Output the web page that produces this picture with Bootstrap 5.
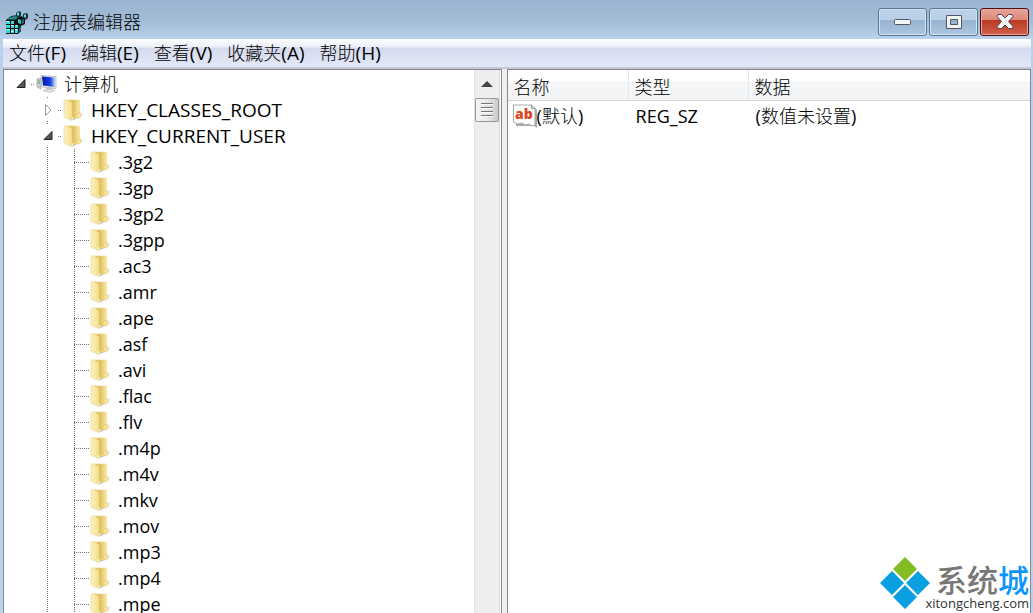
<!DOCTYPE html>
<html lang="zh-CN">
<head>
<meta charset="utf-8">
<meta name="viewport" content="width=device-width, initial-scale=1">
<title>注册表编辑器</title>
<link href="https://cdn.jsdelivr.net/npm/bootstrap@5.3.0/dist/css/bootstrap.min.css" rel="stylesheet">
<style>
body{font-family:"Open Sans","Noto Sans CJK SC",sans-serif;font-size:18px;line-height:26px;color:#000;background:#b9d1ea}
button{font:inherit}
.defs{position:absolute;width:0;height:0}
.titlebar{height:39px;background:linear-gradient(#9ab4d1,#a3bdd8 55%,#b9d1ea);padding-left:5px}
.app-icon{margin-top:10px}
.title-text{font-size:18px;font-weight:300;line-height:36px;padding-top:4px;padding-left:4px}
.cap{width:49px;height:28px;border:1px solid #5c7591;border-radius:3px;box-shadow:inset 0 0 0 1px #d3e2f1;background:linear-gradient(#bcd2e8,#b9cfe5 42%,#98b3cf 43%,#abc6e1);padding:0}
.cap-close{border-color:#4d1017;box-shadow:inset 0 0 0 1px #e9a79e;background:linear-gradient(#e6a497,#dc8878 42%,#b93a22 43%,#d0604c)}
.caps{gap:2px}
.client{margin:0 2px 0 3px;background:#f0f0f0;min-height:0}
.menubar{height:30px;background:linear-gradient(#fff,#e9edf7 30%,#d4daec 31%,#e1e7f7 26px,#e1e7f7);border-bottom:2px solid #c4c8d2;padding-left:6px;gap:15px}
.menubar button{font-size:19px;line-height:28px}
.menubar .zh{font-size:18px}
.split{gap:5px;min-height:0}
.pane{border:1px solid #828790;border-bottom:0;background:#fff}
.tree-pane{flex:0 0 48.5%}
.tree{padding-top:1px}
.tree ul{margin:0;padding:0;list-style:none}
.tree li ul{position:relative;padding-left:27px}
.tree li ul::before{content:"";position:absolute;left:43px;top:0;bottom:0;width:1px;background:repeating-linear-gradient(#777 0 1px,#fff 1px 2px)}
.node{height:26px;padding-left:11px;position:relative}
.toggle{width:12px;height:22px;border:0;background:#fff;padding:0;display:flex;align-items:center;flex:none}
.stub{width:4px;height:1px;margin:0 1px 0 4px;flex:none;background:repeating-linear-gradient(90deg,#777 0 1px,#fff 1px 2px)}
.leaf .stub{width:15px;margin:0 1px 0 5px}
.node svg.ico{width:22px;height:24px;flex:none}
.label{padding-left:6px;white-space:nowrap}
.hive{font-size:19px}
.scroll{width:26px;background:#eee;border-left:1px solid #e3e3e3;border-right:1px solid #dedede;margin-right:1px}
.scroll-up{height:28px;border:0;padding:0;background:transparent}
.thumb{height:24px;border:1px solid #979797;border-radius:2px;background:linear-gradient(90deg,#f5f5f5,#e9e9ea 50%,#c9cbce);padding:0}
.values{table-layout:fixed;width:100%;border-collapse:separate;border-spacing:0}
.values th{height:30px;padding:4px 0 0 6px;font-weight:300;background:linear-gradient(#fff 35%,#f6f7f9 36%,#f2f3f5);border-bottom:1px solid #d5d5d5;border-right:1px solid #e3e8ee}
.values th:last-child{border-right:0}
.values td{height:29px;padding:0 0 0 5px;white-space:nowrap}
.values td + td{padding-left:7px}
.zh{font-weight:300}
.wm{position:absolute;right:4px;bottom:2px}
.wm-name{font:500 31px/32px "Noto Sans CJK SC",sans-serif;color:#777}
.wm-name span{color:#0b96ff}
.wm-url{font:13px/16px "Open Sans",sans-serif;color:#333}
.wm-mark{margin-right:-5px;margin-bottom:2px}
</style>
</head>
<body class="vh-100 overflow-hidden d-flex flex-column position-relative">
<svg class="defs" xmlns="http://www.w3.org/2000/svg" aria-hidden="true">
  <defs>
    <linearGradient id="fy" x1="0" x2="1"><stop offset="0" stop-color="#fcf2bd"/><stop offset="1" stop-color="#f3df8e"/></linearGradient>
    <linearGradient id="fb" x1="0" x2="1"><stop offset="0" stop-color="#e0c05e"/><stop offset=".45" stop-color="#dfbf5c"/><stop offset="1" stop-color="#fbeba6"/></linearGradient>
    <linearGradient id="fs" x1="0" x2="1"><stop offset="0" stop-color="#777" stop-opacity=".7"/><stop offset="1" stop-color="#aaa" stop-opacity="0"/></linearGradient>
    <linearGradient id="scr" x1="0" y1="0" x2="1" y2="0"><stop offset="0" stop-color="#0718a8"/><stop offset=".65" stop-color="#1740dd"/><stop offset="1" stop-color="#a9caf8"/></linearGradient>
  </defs>
  <symbol id="folder" viewBox="0 0 22 24">
    <path d="M9 22.500 22 17 20 14 13 17Z" fill="url(#fs)"/>
    <path d="M5 2h10.500l1 1v15l-3 2-8-1Z" fill="url(#fb)" stroke="#ecd584" stroke-width=".6"/>
    <path d="M14 15h3.500v4l-2 1-1.500-1Z" fill="#f9e7a0" stroke="#e2c564" stroke-width=".6"/>
    <path d="M1 2.500 3 1.500 8 4c.8.500 1 1 1 2v16.500L1.500 19.500 1 19Z" fill="url(#fy)" stroke="#ead588" stroke-width=".6"/>
  </symbol>
  <symbol id="open" viewBox="0 0 12 22"><path d="M10 6.500v8H2Z" fill="#555" stroke="#222"/></symbol>
  <symbol id="closed" viewBox="0 0 12 22"><path d="M3.500 5.500v11L9 11Z" fill="#fff" stroke="#999"/></symbol>
</svg>

<header class="titlebar d-flex align-items-start flex-shrink-0">
  <svg class="app-icon" width="24" height="24" viewBox="0 0 24 24" aria-hidden="true">
    <path d="M1 10 6 6l7-1 3 4v12l-3 3H1Z" fill="#111"/>
    <path d="M2 9.500 5 7l6-1 2 1-2 2.500Z" fill="#26878a"/>
    <path d="M1 11h4v3H1zM6 11h3v3H6zM1 15h4v3H1zM6 15h3v3H6zM10 15h3v3h-3zM1 19h4v4H1zM6 19h3v4H6zM10 19h3v4h-3z" fill="#35dadd"/>
    <path d="M2 11h2v1H2zM6 15h2v1H6zM2 19h2v1H2zM10 19h2v1h-2zM11 15h1v1h-1zM6 21h2v1H6z" fill="#fff"/>
    <path d="M14 13l2-2v4l-2 2zM14 18l2-2v4l-2 2z" fill="#176b70"/>
    <path d="M11 3 14 1l2 1v4l-2 2-3-2Z" fill="#1d3439"/><path d="M12 3l2-1v4l-2-1Z" fill="#5ee1e5"/>
    <path d="M12 9 16 6l4 2v6l-4 2-4-2Z" fill="#111"/><path d="M13 9l3 1v4l-3-1Z" fill="#30c9cd"/><path d="M17 10l2-1v4l-2 1Z" fill="#176b70"/>
    <path d="M18 4 21 3l2 1v4l-2 2-3-2Z" fill="#1d3439"/><path d="M19 5l2-1v4l-2-1Z" fill="#55d9dc"/>
  </svg>
  <h1 class="title-text m-0 flex-grow-1">注册表编辑器</h1>
  <div class="caps d-flex pe-1 pt-2">
    <button type="button" class="cap d-flex align-items-center justify-content-center" aria-label="最小化"><svg width="18" height="7"><rect x=".5" y=".5" width="16" height="5" rx="1" fill="#f4f4f4" stroke="#535666"/></svg></button>
    <button type="button" class="cap d-flex align-items-center justify-content-center" aria-label="最大化"><svg width="18" height="16"><path d="M1.500 1.500h15v13h-15zM5.500 5.500v5h7v-5z" fill="#f4f4f4" fill-rule="evenodd" stroke="#535666"/></svg></button>
    <button type="button" class="cap cap-close d-flex align-items-center justify-content-center" aria-label="关闭"><svg width="18" height="16"><path d="M2 .5h3.500L9 4 12.500.500H16L17 2.500 12.500 7.500 17 12.500 16 14.500H12.500L9 11 5.500 14.500H2L1 12.500 5.500 7.500 1 2.500Z" fill="#f6f6f6" stroke="#57404c" stroke-linejoin="round"/></svg></button>
  </div>
</header>

<main class="client flex-grow-1 d-flex flex-column">
  <nav class="menubar d-flex flex-shrink-0" aria-label="菜单">
    <button type="button" class="border-0 bg-transparent p-0"><span class="zh">文件</span>(F)</button>
    <button type="button" class="border-0 bg-transparent p-0"><span class="zh">编辑</span>(E)</button>
    <button type="button" class="border-0 bg-transparent p-0"><span class="zh">查看</span>(V)</button>
    <button type="button" class="border-0 bg-transparent p-0"><span class="zh">收藏夹</span>(A)</button>
    <button type="button" class="border-0 bg-transparent p-0"><span class="zh">帮助</span>(H)</button>
  </nav>
  <div class="split d-flex flex-grow-1">
    <section class="pane tree-pane d-flex overflow-hidden">
      <div class="tree flex-grow-1 overflow-hidden">
        <ul><li>
          <div class="node d-flex align-items-center">
            <button type="button" class="toggle" aria-label="折叠"><svg width="12" height="22"><use href="#open"/></svg></button><i class="stub"></i>
            <svg class="ico" viewBox="0 0 22 24"><path d="M1 7l4-1v11l-4-2Z" fill="#c9ced2" stroke="#8d9599" stroke-width=".6"/><path d="M2 9h2M2 11h2" stroke="#42b24d"/><path d="M5 3.500 20 4.500v12L6 15Z" fill="#e9edf3" stroke="#a7aeb9" stroke-width=".7"/><path d="M6 4.500 18.800 5.500v9.500L7 13.500Z" fill="url(#scr)"/><path d="M10 15h5l1 3-6-1Z" fill="#c2c7cf"/><path d="M7 18.500 13 17l6 1.500-5 2Z" fill="#dfe3e8" stroke="#a3a8b0" stroke-width=".5"/></svg>
            <span class="label zh">计算机</span>
          </div>
          <ul>
            <li><div class="node d-flex align-items-center"><button type="button" class="toggle" aria-label="展开"><svg width="12" height="22"><use href="#closed"/></svg></button><i class="stub"></i><svg class="ico"><use href="#folder"/></svg><span class="label hive">HKEY_CLASSES_ROOT</span></div></li>
            <li><div class="node d-flex align-items-center"><button type="button" class="toggle" aria-label="折叠"><svg width="12" height="22"><use href="#open"/></svg></button><i class="stub"></i><svg class="ico"><use href="#folder"/></svg><span class="label hive">HKEY_CURRENT_USER</span></div>
              <ul id="keys"></ul>
            </li>
          </ul>
        </li></ul>
      </div>
      <div class="scroll d-flex flex-column flex-shrink-0">
        <button type="button" class="scroll-up" aria-label="向上滚动"><svg width="12" height="7" class="d-block mx-auto"><path d="M6 0l6 6H0Z" fill="#444"/></svg></button>
        <button type="button" class="thumb d-flex align-items-center justify-content-center" aria-label="滚动条"><svg width="14" height="14"><path d="M1 .5h12M1 4.500h12M1 8.500h12M1 12.500h12" stroke="#777"/><path d="M1 1.500h12M1 5.500h12M1 9.500h12M1 13.500h12" stroke="#fff"/></svg></button>
      </div>
    </section>
    <section class="pane flex-grow-1 overflow-hidden">
      <table class="values">
        <colgroup><col style="width:121px"><col style="width:120px"><col></colgroup>
        <thead><tr><th>名称</th><th>类型</th><th>数据</th></tr></thead>
        <tbody><tr>
          <td><div class="d-flex align-items-center"><svg width="24" height="24" viewBox="0 0 24 24" class="flex-shrink-0" role="img" aria-label="ab"><path d="M3 3h18l3 3v18l-3-2H3Z" fill="#a9aaab"/><path d="M.5 1h18L22 4.500V21l-3 1-3-2-4 1-3-2-4 1-4.500-2Z" fill="#fff" stroke="#aaa"/><path d="M18.500 1v3.500H22" fill="#ccc" stroke="#999"/><text x="2" y="15" font-family="Open Sans, sans-serif" font-weight="800" font-size="14" fill="#dc4523">ab</text></svg><span>(<span class="zh">默认</span>)</span></div></td>
          <td>REG_SZ</td>
          <td>(<span class="zh">数值未设置</span>)</td>
        </tr></tbody>
      </table>
    </section>
  </div>
</main>

<aside class="wm d-flex align-items-end">
  <svg class="wm-mark" width="50" height="52" viewBox="0 0 50 52" aria-hidden="true"><path d="M25 0 37 12 25 24 13 12Z" fill="#83bd25"/><path d="M12 14 24 26 12 38 0 26ZM38 14 50 26 38 38 26 26ZM25 28 37 40 25 52 13 40Z" fill="#0a9fe0"/></svg>
  <div class="text-end"><div class="wm-name">系统<span>城</span></div><div class="wm-url">xitongcheng.com</div></div>
</aside>

<script src="https://cdn.jsdelivr.net/npm/bootstrap@5.3.0/dist/js/bootstrap.bundle.min.js"></script>
<script>
const keys = ['.3g2','.3gp','.3gp2','.3gpp','.ac3','.amr','.ape','.asf','.avi','.flac','.flv','.m4p','.m4v','.mkv','.mov','.mp3','.mp4','.mpe'];
document.getElementById('keys').innerHTML = keys.map(k =>
  `<li><div class="node leaf d-flex align-items-center"><i class="stub"></i><svg class="ico"><use href="#folder"/></svg><span class="label">${k}</span></div></li>`).join('');
</script>
</body>
</html>
